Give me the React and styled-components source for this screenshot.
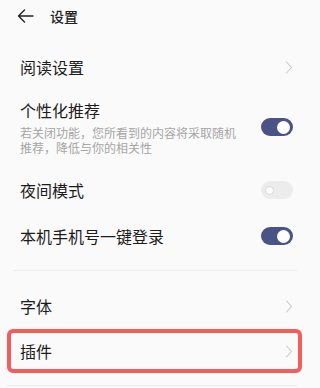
import React from "react";
import styled, { createGlobalStyle } from "styled-components";

const Global = createGlobalStyle`
  html, body { margin: 0; padding: 0; background: #fafafa; }
  body { font-family: "Noto Sans CJK SC", "Noto Sans", sans-serif; }
`;

const Page = styled.div`
  width: 307px;
  height: 388px;
  overflow: hidden;
  background: #fafafa;
  display: flex;
  flex-direction: column;
  color: #1f1f1f;
`;

const Header = styled.div`
  height: 32px;
  display: flex;
  align-items: center;
  padding-left: 17px;
  gap: 16px;
  margin-bottom: 12px;
`;

const HeaderTitle = styled.div`
  font-size: 14px;
  line-height: 20px;
  font-weight: 500;
  color: #222;
`;

const Row = styled.div`
  display: flex;
  align-items: center;
  justify-content: space-between;
  min-height: ${(p) => p.$h || 46}px;
  padding: ${(p) => p.$pad || "0 14px 0 20px"};
  box-sizing: border-box;
`;

const HighlightRow = styled(Row)`
  margin: 0 5px 0 7px;
  border: 4px solid #f45d5b;
  border-radius: 6px;
  padding: 0 5px 0 9px;
  min-height: 44px;
`;

const TextCol = styled.div`
  display: flex;
  flex-direction: column;
`;

const Label = styled.div`
  font-size: 16px;
  line-height: 22px;
  color: #1c1c1c;
`;

const Sub = styled.div`
  margin-top: 4px;
  font-size: 12px;
  line-height: 15px;
  color: #a6a6a6;
  width: 220px;
`;

const Track = styled.div`
  width: 32px;
  height: 18px;
  border-radius: 9px;
  background: ${(p) => (p.$on ? "#4a5386" : "#ececec")};
  display: flex;
  align-items: center;
  justify-content: ${(p) => (p.$on ? "flex-end" : "flex-start")};
  padding: 0 3px;
  box-sizing: border-box;
  flex-shrink: 0;
`;

const Knob = styled.div`
  width: ${(p) => (p.$on ? 13 : 9)}px;
  height: ${(p) => (p.$on ? 13 : 9)}px;
  margin-left: ${(p) => (p.$on ? 0 : 1)}px;
  border-radius: 50%;
  background: #fff;
  box-sizing: border-box;
  border: ${(p) => (p.$on ? "none" : "1.5px solid #d6d6d6")};
`;

const Divider = styled.div`
  height: 1px;
  background: #ececec;
  margin: ${(p) => p.$m || "0"};
`;

const Toggle = ({ on }) => (
  <Track $on={on}>
    <Knob $on={on} />
  </Track>
);

const Chevron = () => (
  <svg width="8" height="13" viewBox="0 0 8 13" style={{ flexShrink: 0 }}>
    <path d="M1.5 1 L6.5 6.5 L1.5 12" fill="none" stroke="#c8c8c8" strokeWidth="1.1" strokeLinecap="round" strokeLinejoin="round" />
  </svg>
);

const BackArrow = () => (
  <svg width="17" height="14" viewBox="0 0 17 14">
    <path d="M16 7 H1.5 M7.5 1 L1.5 7 L7.5 13" fill="none" stroke="#222" strokeWidth="1.4" strokeLinecap="round" strokeLinejoin="round" />
  </svg>
);

export default function App() {
  return (
    <Page>
      <Global />
      <Header>
        <BackArrow />
        <HeaderTitle>设置</HeaderTitle>
      </Header>
      <Row>
        <Label>阅读设置</Label>
        <Chevron />
      </Row>
      <Row $h={77} $pad="9px 14px 12px 20px">
        <TextCol>
          <Label>个性化推荐</Label>
          <Sub>若关闭功能，您所看到的内容将采取随机推荐，降低与你的相关性</Sub>
        </TextCol>
        <Toggle on />
      </Row>
      <Row>
        <Label>夜间模式</Label>
        <Toggle />
      </Row>
      <Row>
        <Label>本机手机号一键登录</Label>
        <Toggle on />
      </Row>
      <Divider $m="11px 10px 12px 13px" />
      <Row>
        <Label>字体</Label>
        <Chevron />
      </Row>
      <HighlightRow>
        <Label>插件</Label>
        <Chevron />
      </HighlightRow>
      <Divider $m="12px 10px 0 7px" />
    </Page>
  );
}
